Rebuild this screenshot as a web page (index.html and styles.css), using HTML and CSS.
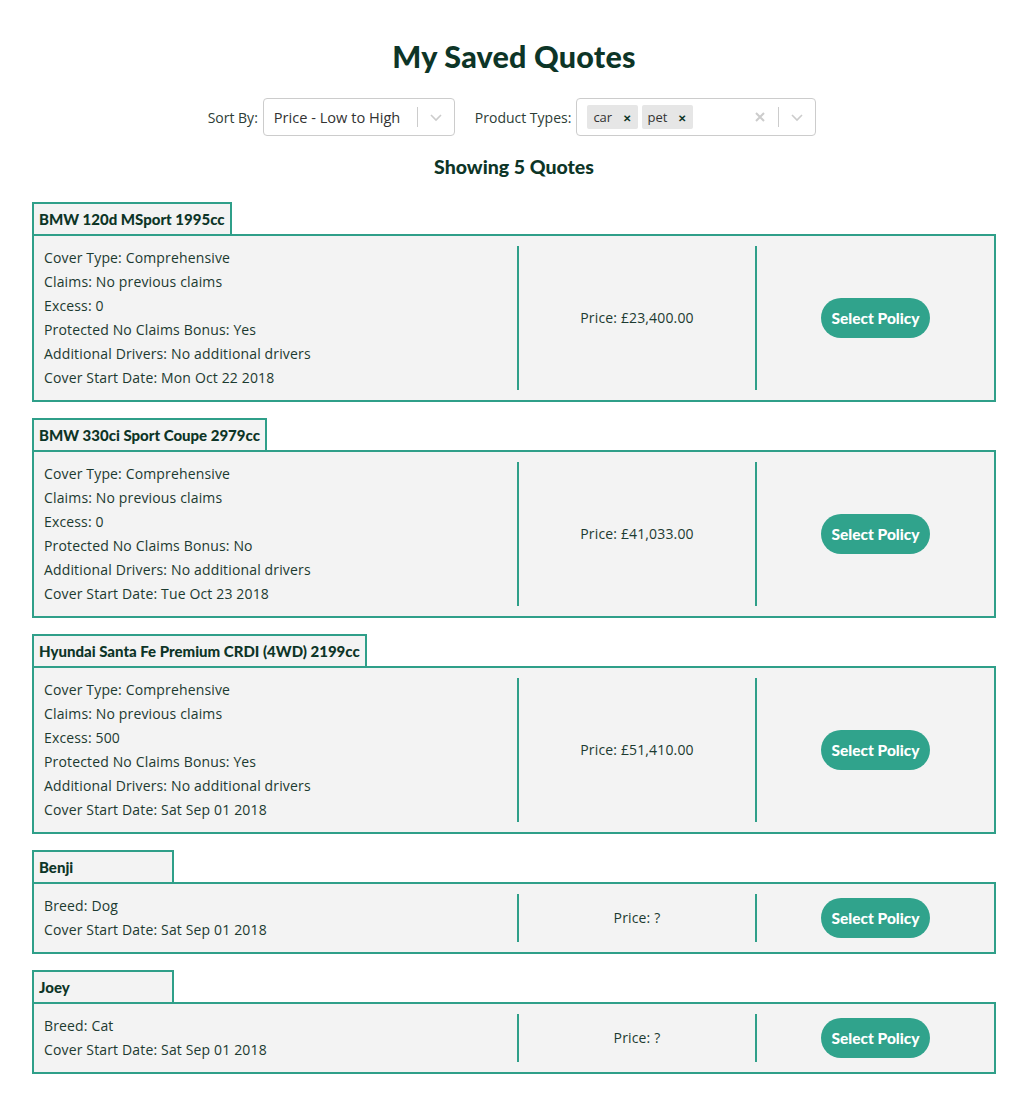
FILE: index.html
```html
<!DOCTYPE html>
<html lang="en">
<head>
<meta charset="utf-8">
<title>My Saved Quotes</title>
<link rel="stylesheet" href="styles.css">
</head>
<body>
<div class="page">
  <h1 class="title">My Saved Quotes</h1>
  <div class="filters">
    <span class="label">Sort By:</span>
    <div class="select sort">
      <span class="value">Price - Low to High</span>
      <span class="indicators">
        <span class="sep"></span>
        <svg class="chev" width="20" height="20" viewBox="0 0 20 20"><path d="M5 8l5 5 5-5" fill="none" stroke="#ccc" stroke-width="1.6"/></svg>
      </span>
    </div>
    <span class="label gap">Product Types:</span>
    <div class="select types">
      <span class="chips">
        <span class="chip">car <span class="x">&#x2715;</span></span>
        <span class="chip">pet <span class="x">&#x2715;</span></span>
      </span>
      <span class="indicators">
        <svg class="clear" width="20" height="20" viewBox="0 0 20 20"><path d="M6 6l8 8M14 6l-8 8" fill="none" stroke="#ccc" stroke-width="2"/></svg>
        <span class="sep"></span>
        <svg class="chev" width="20" height="20" viewBox="0 0 20 20"><path d="M5 8l5 5 5-5" fill="none" stroke="#ccc" stroke-width="1.6"/></svg>
      </span>
    </div>
  </div>
  <h2 class="count">Showing 5 Quotes</h2>

  <div class="quote">
    <div class="tab">BMW 120d MSport 1995cc</div>
    <div class="body">
      <div class="details">
        <div>Cover Type: Comprehensive</div>
        <div>Claims: No previous claims</div>
        <div>Excess: 0</div>
        <div>Protected No Claims Bonus: Yes</div>
        <div>Additional Drivers: No additional drivers</div>
        <div>Cover Start Date: Mon Oct 22 2018</div>
      </div>
      <div class="price">Price: £23,400.00</div>
      <div class="action"><button class="btn">Select Policy</button></div>
    </div>
  </div>

  <div class="quote">
    <div class="tab">BMW 330ci Sport Coupe 2979cc</div>
    <div class="body">
      <div class="details">
        <div>Cover Type: Comprehensive</div>
        <div>Claims: No previous claims</div>
        <div>Excess: 0</div>
        <div>Protected No Claims Bonus: No</div>
        <div>Additional Drivers: No additional drivers</div>
        <div>Cover Start Date: Tue Oct 23 2018</div>
      </div>
      <div class="price">Price: £41,033.00</div>
      <div class="action"><button class="btn">Select Policy</button></div>
    </div>
  </div>

  <div class="quote">
    <div class="tab">Hyundai Santa Fe Premium CRDI (4WD) 2199cc</div>
    <div class="body">
      <div class="details">
        <div>Cover Type: Comprehensive</div>
        <div>Claims: No previous claims</div>
        <div>Excess: 500</div>
        <div>Protected No Claims Bonus: Yes</div>
        <div>Additional Drivers: No additional drivers</div>
        <div>Cover Start Date: Sat Sep 01 2018</div>
      </div>
      <div class="price">Price: £51,410.00</div>
      <div class="action"><button class="btn">Select Policy</button></div>
    </div>
  </div>

  <div class="quote">
    <div class="tab">Benji</div>
    <div class="body">
      <div class="details">
        <div>Breed: Dog</div>
        <div>Cover Start Date: Sat Sep 01 2018</div>
      </div>
      <div class="price">Price: ?</div>
      <div class="action"><button class="btn">Select Policy</button></div>
    </div>
  </div>

  <div class="quote">
    <div class="tab">Joey</div>
    <div class="body">
      <div class="details">
        <div>Breed: Cat</div>
        <div>Cover Start Date: Sat Sep 01 2018</div>
      </div>
      <div class="price">Price: ?</div>
      <div class="action"><button class="btn">Select Policy</button></div>
    </div>
  </div>
</div>
</body>
</html>
```

FILE: styles.css
```css
* { box-sizing: border-box; }
html, body { margin: 0; padding: 0; background: #fff; }
body {
  font-family: "Open Sans", "Liberation Sans", sans-serif;
  color: #1c3a30;
}
.page {
  width: 964px;
  margin-left: 32px;
  padding-top: 36px;
  padding-bottom: 32px;
}
.title {
  margin: 0;
  text-align: center;
  font-family: "Lato", sans-serif;
  font-weight: 900;
  font-size: 30.5px;
  line-height: 40px;
  color: #0d3527;
  letter-spacing: 0.2px;
}
.filters {
  margin-top: 22px;
  margin-left: -4px;
  display: flex;
  align-items: center;
  justify-content: center;
  font-size: 14px;
}
.label { color: #2d3d36; margin-right: 5px; }
.label.gap { margin-left: 20px; }
.select {
  height: 38px;
  border: 1px solid #ccc;
  border-radius: 4px;
  display: flex;
  align-items: center;
  background: #fff;
}
.select.sort { width: 192px; padding-left: 10px; }
.select.types { width: 240px; padding-left: 10px; }
.value { flex: 1; color: #333; font-size: 14.6px; }
.chips { flex: 1; display: flex; gap: 4px; }
.chip {
  background: #e6e6e6;
  border-radius: 2px;
  height: 24px;
  line-height: 24px;
  padding: 0 7px 0 6px;
  font-size: 13px;
  color: #333;
}
.chip .x {
  font-size: 10px;
  font-weight: 700;
  color: #0d3527;
  margin-left: 7px;
}
.indicators { display: flex; align-items: center; }
.sep { width: 1px; height: 20px; background: #ccc; margin: 0 8px; }
.chev { margin-right: 8px; }
.count {
  margin: 19px 0 0;
  text-align: center;
  font-family: "Lato", sans-serif;
  font-weight: 900;
  font-size: 19.5px;
  line-height: 24px;
  color: #0d3527;
}
.quote { margin-top: 16px; }
.count + .quote { margin-top: 23px; }
.tab {
  display: inline-block;
  min-width: 142px;
  border: 2px solid #2f9f89;
  border-bottom: 0;
  background: #f3f3f3;
  padding: 6px 5px 5px;
  font-family: "Lato", sans-serif;
  font-weight: 900;
  font-size: 15px;
  line-height: 19px;
  color: #0d3527;
  vertical-align: top;
}
.body {
  border: 2px solid #2f9f89;
  background: #f3f3f3;
  padding: 10px 0;
  display: grid;
  grid-template-columns: 483px 238px 1fr;
  font-size: 14px;
  line-height: 24px;
  letter-spacing: 0.15px;
}
.details { padding-left: 10px; color: #1c3a30; }
.price, .action {
  border-left: 2px solid #2f9f89;
  display: flex;
  align-items: center;
  justify-content: center;
}
.price { color: #1c3a30; }
.btn {
  border: 0;
  background: #30a38c;
  color: #fff;
  font-family: "Lato", sans-serif;
  font-weight: 900;
  font-size: 15.5px;
  height: 40px;
  padding: 0 10px;
  border-radius: 20px;
  cursor: pointer;
}
```
